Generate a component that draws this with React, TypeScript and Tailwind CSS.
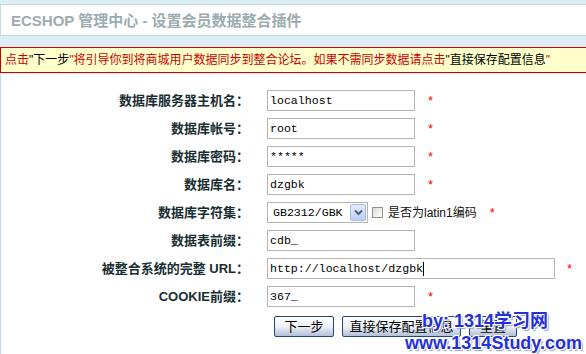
import React from 'react';

const labelCls =
  "w-[248px] shrink-0 text-right text-[13px] font-bold text-[#192E32] leading-none";
const inputCls =
  "h-[21px] border border-[#b5b5b5] bg-white flex items-center pl-[2px] text-[11.6px] text-black leading-none";
const mono = { fontFamily: '"Liberation Mono", "DejaVu Sans Mono", monospace' };

const Star = ({ ml = 'ml-[13px]' }: { ml?: string }) => (
  <span className={`${ml} text-[13px] text-[#ff0000] leading-none`}>*</span>
);

const Row = ({ label, children }: { label: string; children: React.ReactNode }) => (
  <div className="flex items-center h-[21px]">
    <div className={labelCls}>{label}</div>
    <div className="ml-[18px] flex items-center">{children}</div>
  </div>
);

const TextBox = ({ value, width = 'w-[148px]', caret = false }: { value: string; width?: string; caret?: boolean }) => (
  <div className={`${inputCls} ${width}`} style={mono}>
    <span>{value}</span>
    {caret && <span className="inline-block w-px h-[14px] bg-black" />}
  </div>
);

const XpButton = ({ children, width }: { children: React.ReactNode; width: string }) => (
  <div
    className={`${width} h-[21px] border border-[#24467e] rounded-[2px] bg-gradient-to-b from-white via-[#eef1f7] to-[#b3c0d6] flex items-center justify-center text-[13px] text-black leading-none`}
  >
    {children}
  </div>
);

export default function App() {
  return (
    <div
      className="relative w-[586px] h-[354px] overflow-hidden bg-[#DDEEF2] flex flex-col pt-[4px]"
      style={{ fontFamily: '"Liberation Sans", "Noto Sans CJK SC", sans-serif' }}
    >
      {/* title */}
      <div className="h-[32px] shrink-0 border border-r-0 border-[#BBDDE5] bg-white flex items-center pl-[10px]">
        <span className="text-[15px] font-bold text-[#9CACAF] leading-none">
          ECSHOP 管理中心 - 设置会员数据整合插件
        </span>
      </div>

      {/* warning */}
      <div className="mt-[11px] h-[26px] shrink-0 border border-r-0 border-[#CC0000] bg-[#FFFFCC] flex items-center pl-[4px] text-[12px] leading-none whitespace-nowrap">
        <span className="text-[#CC0000]">点击</span>
        <span className="text-black">"下一步</span>
        <span className="text-[#CC0000]">"将引导你到将商城用户数据同步到整合论坛。如果不需同步数据请点击</span>
        <span className="text-black">"直接保存配置信息</span>
        <span className="text-[#CC0000]">"</span>
      </div>

      {/* form */}
      <div className="mt-[1px] flex-1 bg-white border-l border-[#BBDDE5] pt-[16px] flex flex-col gap-[7px]">
        <Row label="数据库服务器主机名：">
          <TextBox value="localhost" />
          <Star />
        </Row>
        <Row label="数据库帐号：">
          <TextBox value="root" />
          <Star />
        </Row>
        <Row label="数据库密码：">
          <TextBox value="*****" />
          <Star />
        </Row>
        <Row label="数据库名：">
          <TextBox value="dzgbk" />
          <Star />
        </Row>
        <Row label="数据库字符集：">
          <div className="w-[101px] h-[21px] border border-[#b5b5b5] bg-white flex items-center justify-between pl-[5px] pr-[1px]">
            <span className="text-[11.6px] text-black leading-none" style={mono}>GB2312/GBK</span>
            <div className="w-[16px] h-[17px] border border-[#a7bce8] rounded-[2px] bg-gradient-to-b from-[#e4ecfc] to-[#b9cdf5] flex items-center justify-center">
              <svg width="9" height="7" viewBox="0 0 9 7">
                <path d="M1 1.5 L4.5 5 L8 1.5" fill="none" stroke="#4d6185" strokeWidth="2" />
              </svg>
            </div>
          </div>
          <div className="ml-[4px] w-[11px] h-[11px] border border-[#8f8f8f] bg-gradient-to-br from-[#dcdcd6] to-white" />
          <span className="ml-[5px] text-[12px] text-[#111] leading-none">是否为latin1编码</span>
          <Star />
        </Row>
        <Row label="数据表前缀：">
          <TextBox value="cdb_" />
        </Row>
        <Row label="被整合系统的完整 URL：">
          <TextBox value="http://localhost/dzgbk" width="w-[288px]" caret />
          <Star ml="ml-[12px]" />
        </Row>
        <Row label="COOKIE前缀：">
          <TextBox value="367_" />
          <Star />
        </Row>
        <div className="mt-[2px] flex items-center pl-[273px] gap-[8px]">
          <XpButton width="w-[60px]">下一步</XpButton>
          <XpButton width="w-[119px]">直接保存配置信息</XpButton>
          <XpButton width="w-[48px]">重置</XpButton>
        </div>
      </div>

      {/* watermark */}
      <div
        className="absolute left-[405px] top-[312px] font-bold text-[#2430d8] leading-none whitespace-nowrap"
        style={{ textShadow: '1px 1px 0 #fff, -1px -1px 0 #fff, 1px -1px 0 #fff, -1px 1px 0 #fff, 2px 2px 1px #9aa3c8' }}
      >
        <div className="pl-[17px] text-[18px]">by: 1314学习网</div>
        <div className="mt-[4px] text-[18px]">www.1314Study.com</div>
      </div>
    </div>
  );
}
